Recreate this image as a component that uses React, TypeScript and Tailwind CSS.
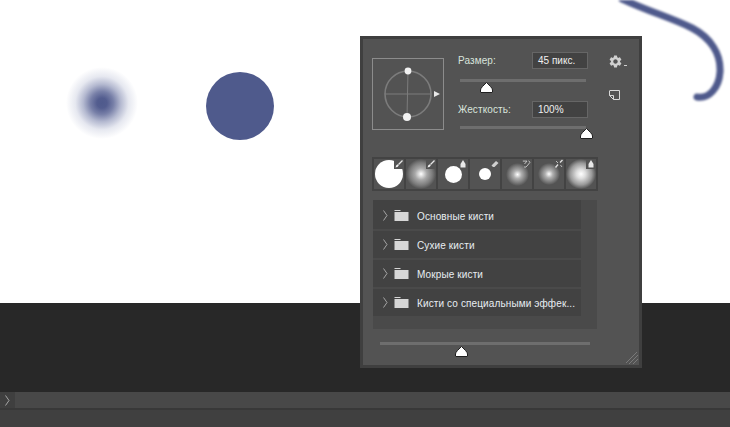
import { MdSettings } from "react-icons/md";

const FONT = "font-['Liberation_Sans',Arial,sans-serif]";

function Thumb({ className }: { className: string }) {
  return (
    <svg className={`absolute ${className}`} width="13" height="11" viewBox="0 0 13 11">
      <path d="M6.5 .5 L10.5 4.5 Q12.5 6.5 12.5 8 V10 Q12.5 10.5 12 10.5 H1 Q.5 10.5 .5 10 V8 Q.5 6.5 2.5 4.5 Z" fill="#fff" stroke="#1f1f1f" strokeWidth="1" />
    </svg>
  );
}

function CornerIcon({ kind }: { kind: string }) {
  if (kind === "brush")
    return (
      <svg width="10" height="10" viewBox="0 0 10 10">
        <path d="M8.5 1.5 L4.5 5.5" stroke="#e6e6e6" strokeWidth="1.2" />
        <path d="M1.5 8.5 Q2 5.5 3.8 5.2 L4.8 6.2 Q4.5 8 1.5 8.5 Z" fill="#f0f0f0" />
      </svg>
    );
  if (kind === "drop")
    return (
      <svg width="10" height="10" viewBox="0 0 10 10">
        <path d="M5 1 L7.5 5 V8.5 H2.5 V5 Z" fill="#e8e8e8" />
      </svg>
    );
  if (kind === "eraser")
    return (
      <svg width="10" height="10" viewBox="0 0 10 10">
        <path d="M1.5 6.5 L6 2 L8.5 4 L4.5 8 H3 Z" fill="#cfcfcf" />
      </svg>
    );
  if (kind === "mixed")
    return (
      <svg width="12" height="10" viewBox="0 0 12 10" fill="none">
        <path d="M1 1.5 H6 L3 5 M8 1 Q11 3 8 5 L5 8.5 Q3 9.5 2.5 8" stroke="#d8d8d8" strokeWidth="1" />
      </svg>
    );
  return (
    <svg width="10" height="10" viewBox="0 0 10 10" fill="none">
      <path d="M8.5 1 L6 3.5 M4 5.5 L1.5 8.5" stroke="#e0e0e0" strokeWidth="1.4" />
      <path d="M2 2 L4 4 M6.5 6 L8 8" stroke="#bdbdbd" strokeWidth="1" />
    </svg>
  );
}

const BRUSHES = [
  { tip: "w-[28px] h-[28px] bg-white", icon: "brush", corner: "bg-[#535353]" },
  { tip: "w-[30px] h-[30px] bg-[radial-gradient(closest-side,#ffffff_0%,#a8a8a8_40%,#7c7c7c_75%,#535353_100%)]", icon: "brush", corner: "bg-[#535353]" },
  { tip: "w-[17px] h-[17px] bg-white", icon: "drop", corner: "" },
  { tip: "w-[12px] h-[12px] bg-white", icon: "eraser", corner: "" },
  { tip: "w-[23px] h-[23px] bg-[radial-gradient(closest-side,#ffffff_0%,#b0b0b0_35%,#7c7c7c_72%,#535353_100%)]", icon: "mixed", corner: "" },
  { tip: "w-[22px] h-[22px] bg-[radial-gradient(closest-side,#ffffff_0%,#b0b0b0_35%,#7c7c7c_72%,#535353_100%)]", icon: "split", corner: "" },
  { tip: "w-[30px] h-[30px] bg-[radial-gradient(closest-side,#ffffff_0%,#dedede_30%,#9a9a9a_72%,#535353_100%)]", icon: "drop", corner: "bg-[#535353]" },
];

const SETS = ["Основные кисти", "Сухие кисти", "Мокрые кисти", "Кисти со специальными эффек..."];

function Folder() {
  return (
    <svg className="shrink-0" width="15" height="13" viewBox="0 0 15 13">
      <rect x="0.5" y="1" width="6" height="1" fill="#d6d6d6" />
      <rect x="0.5" y="3" width="14" height="9" fill="#d6d6d6" />
    </svg>
  );
}

function Chevron({ h = 11 }: { h?: number }) {
  return (
    <svg className="shrink-0" width="5" height={h} viewBox={`0 0 5 ${h}`} fill="none">
      <path d={`M.5 .5 L4 ${h / 2} L.5 ${h - 0.5}`} stroke="#a6a6a6" strokeWidth="1" />
    </svg>
  );
}

function Preview() {
  return (
    <div className="mt-[6px] w-[72px] h-[72px] border border-[#8c8c8c] shrink-0">
      <svg width="70" height="70" viewBox="0 0 70 70" fill="none">
        <circle cx="35" cy="35" r="23" stroke="#7c7c7c" strokeWidth="1.6" />
        <path d="M12 35 H58 M35 12 L34 58" stroke="#7c7c7c" strokeWidth="1" />
        <circle cx="35" cy="12" r="3.4" fill="#f2f2f2" />
        <circle cx="34" cy="58" r="4" fill="#f2f2f2" />
        <path d="M61 32 L67 35 L61 38 Z" fill="#e8e8e8" />
      </svg>
    </div>
  );
}

function Field({ label, value }: { label: string; value: string }) {
  return (
    <div className="flex items-center justify-between h-[17px]">
      <span className="text-[10px] tracking-[0.1px] text-[#d8e4dc]">{label}</span>
      <div className="w-[56px] h-[17px] border border-[#666666] bg-[#424242] pl-[5px] text-[10px] leading-[16px] text-[#f0f0f0]">{value}</div>
    </div>
  );
}

function BrushPanel() {
  return (
    <div className={`absolute left-[360px] top-[36px] w-[282px] h-[332px] border-[3px] border-[#3f3f3f] bg-[#535353] ${FONT}`}>
      <div className="flex pt-[13px] pl-[9px]">
        <Preview />
        <div className="ml-[14px] w-[130px]">
          <Field label="Размер:" value="45 пикс." />
          <div className="relative mt-[10px] ml-[2px] w-[126px] h-[3px] bg-[#6e6e6e]">
            <Thumb className="left-[20px] top-[3px]" />
          </div>
          <div className="mt-[19px]">
            <Field label="Жесткость:" value="100%" />
          </div>
          <div className="relative mt-[8px] ml-[2px] w-[126px] h-[3px] bg-[#6e6e6e]">
            <Thumb className="left-[120px] top-[2px]" />
          </div>
        </div>
        <div className="ml-[21px] pt-[2px] flex flex-col">
          <div className="flex items-end">
            <MdSettings className="text-[#d0d0d0] -ml-[1px]" size={15} />
            <div className="ml-[1px] mb-[3px] w-[3px] h-[1px] bg-[#d0d0d0]" />
          </div>
          <svg className="mt-[21px]" width="11" height="10" viewBox="0 0 11 10" fill="none">
            <path d="M1 .5 H10.5 V9.5 H4.5 L.5 5.5 V.5 M.5 5.5 H4.5 V9.5" stroke="#d8d8d8" strokeWidth="1" />
          </svg>
        </div>
      </div>

      <div className="mt-[27px] ml-[9px] w-[226px] h-[34px] bg-[#434343] p-[2px] flex gap-[2px]">
        {BRUSHES.map((b, i) => (
          <div key={i} className="relative w-[30px] h-[30px] bg-[#535353] flex items-center justify-center">
            <div className={`rounded-full ${b.tip}`} />
            <div className={`absolute right-0 top-0 w-[10px] h-[10px] flex items-center justify-center ${b.corner}`}>
              <CornerIcon kind={b.icon} />
            </div>
          </div>
        ))}
      </div>

      <div className="mt-[9px] ml-[10px] w-[224px] h-[129px] bg-[#4a4a4a]">
        <div className="w-[208px] h-[2px] bg-[#424242]" />
        <div className="flex flex-col gap-[2px]">
          {SETS.map((s) => (
            <div key={s} className="w-[208px] h-[27px] bg-[#424242] flex items-center pl-[10px]">
              <Chevron />
              <div className="ml-[6px] flex">
                <Folder />
              </div>
              <span className="ml-[8px] pt-[2px] text-[10px] tracking-[0.12px] text-[#e8eef2] whitespace-nowrap">{s}</span>
            </div>
          ))}
        </div>
      </div>

      <div className="relative mt-[13px] ml-[17px] w-[210px] h-[3px] bg-[#6e6e6e]">
        <Thumb className="left-[75px] top-[4px]" />
      </div>

      <svg className="absolute right-0 bottom-0" width="14" height="14" viewBox="0 0 14 14" fill="none">
        <path d="M1 12 L12 1 M4 13 L13 4 M8 13 L13 8" stroke="#7a7a7a" strokeWidth="1" />
      </svg>
    </div>
  );
}

function Canvas() {
  return (
    <div className="relative h-[303px] bg-white overflow-hidden">
      <div className="absolute left-[66px] top-[67px] w-[72px] h-[72px] rounded-full bg-[radial-gradient(closest-side,#4f5a8c_0%,#535d8f_14%,#7880a8_32%,#b4b9d0_52%,#e6e8f0_74%,#ffffff_100%)]" />
      <div className="absolute left-[206px] top-[72px] w-[68px] h-[68px] rounded-full bg-[#4f5a8c]" />
      <svg className="absolute left-[610px] top-0 blur-[0.8px]" width="120" height="110" viewBox="0 0 120 110" fill="none">
        <path d="M12 -1 C40 12 62 18 82 28 C101 38 111 54 110 72 C109 88 99 99 87 97" stroke="#4f5a8c" strokeWidth="7" strokeLinecap="round" />
      </svg>
    </div>
  );
}

export default function App() {
  return (
    <div className="relative w-[730px] h-[427px] overflow-hidden">
      <Canvas />
      <div className="h-[89px] bg-[#282828]" />
      <div className="h-[16px] bg-[#484848] flex">
        <div className="w-[15px] bg-[#3f3f3f] flex items-center justify-center">
          <Chevron />
        </div>
      </div>
      <div className="h-[2px] bg-[#383838]" />
      <div className="h-[17px] bg-[#404040]" />
      <BrushPanel />
    </div>
  );
}
